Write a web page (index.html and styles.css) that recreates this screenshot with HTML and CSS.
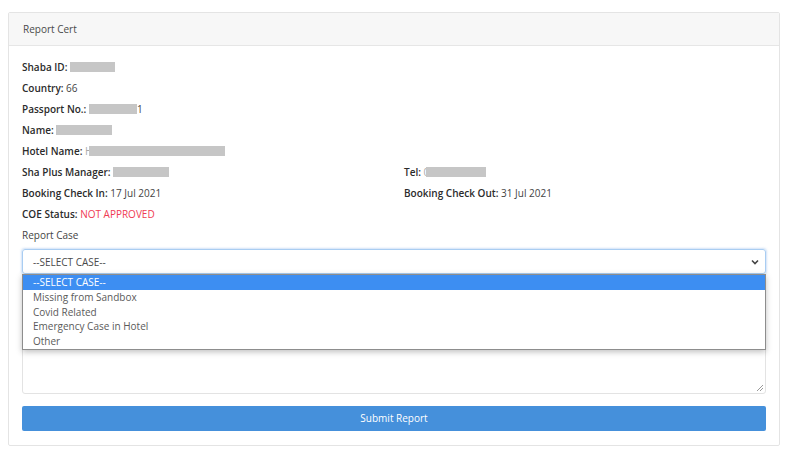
FILE: index.html
```html
<!DOCTYPE html>
<html>
<head>
<meta charset="utf-8">
<link rel="stylesheet" href="styles.css">
</head>
<body>
<div class="card">
  <div class="card-header">Report Cert</div>
  <div class="card-body">
    <div class="line"><b>Shaba ID:</b> <span class="redact" style="width:45px"></span></div>
    <div class="line"><b>Country:</b> 66</div>
    <div class="line"><b>Passport No.:</b> <span class="redact" style="width:48px"></span>1</div>
    <div class="line"><b>Name:</b> <span class="redact" style="width:56px"></span></div>
    <div class="line"><b>Hotel Name:</b> <span class="partial">H</span><span class="redact" style="width:136px"></span></div>
    <div class="two">
      <div class="line"><b>Sha Plus Manager:</b> <span class="redact" style="width:56px"></span></div>
      <div class="line"><b>Tel:</b> <span class="partial">0</span><span class="redact" style="width:60px"></span></div>
      <div class="line"><b>Booking Check In:</b> 17 Jul 2021</div>
      <div class="line"><b>Booking Check Out:</b> 31 Jul 2021</div>
    </div>
    <div class="line"><b>COE Status:</b> <span class="red">NOT APPROVED</span></div>
    <div class="line label">Report Case</div>
    <div class="select-wrap">
      <div class="select">
        <span>--SELECT CASE--</span>
        <svg class="chev" width="8" height="6" viewBox="0 0 8 6"><path d="M1 1.5 L4 4.5 L7 1.5" fill="none" stroke="#444" stroke-width="1.6"/></svg>
      </div>
      <ul class="dropdown">
        <li class="sel">--SELECT CASE--</li>
        <li>Missing from Sandbox</li>
        <li>Covid Related</li>
        <li>Emergency Case in Hotel</li>
        <li>Other</li>
      </ul>
    </div>
    <div class="textarea">
      <svg class="grip" width="8" height="8" viewBox="0 0 8 8"><path d="M7 1 L1 7 M7 4 L4 7" stroke="#999" stroke-width="1"/></svg>
    </div>
    <div class="btn">Submit Report</div>
  </div>
</div>
</body>
</html>
```
FILE: styles.css
```css
html, body {
  margin: 0;
  padding: 0;
  background: #ffffff;
}
body {
  padding: 12px 12px 0 8px;
  font-family: "Open Sans", "Noto Sans", sans-serif;
  font-size: 10px;
  color: #3a3a3a;
}
.card {
  width: 772px;
  border: 1px solid #e4e4e4;
  border-radius: 2px;
  box-sizing: border-box;
  background: #fff;
}
.card-header {
  height: 32px;
  line-height: 32px;
  padding-left: 14px;
  background: #f7f7f7;
  border-bottom: 1px solid #e6e6e6;
  color: #4a4a4a;
}
.card-body {
  padding: 11px 13px 14px 13px;
}
.line {
  height: 21px;
  line-height: 21px;
  white-space: nowrap;
  color: #444;
}
.line b {
  font-weight: 600;
  color: #2b2b2b;
}
.two {
  display: grid;
  grid-template-columns: 361px 1fr;
  column-gap: 21px;
}
.redact {
  display: inline-block;
  height: 10px;
  background: #c6c6c6;
  vertical-align: -1px;
}
.partial {
  color: #aaa;
  margin-right: -3px;
}
.red {
  color: #ef3b52;
}
.label {
  color: #444;
}
.select-wrap {
  position: relative;
  margin-top: 3px;
}
.select {
  height: 25px;
  box-sizing: border-box;
  border: 1px solid #a9cdf2;
  border-radius: 3px;
  box-shadow: 0 0 2px 1px rgba(120, 170, 230, 0.35);
  display: flex;
  align-items: center;
  justify-content: space-between;
  padding: 0 6px 0 10px;
  color: #4a4a4a;
}
.chev {
  display: block;
}
.dropdown {
  position: absolute;
  left: 0;
  right: 0;
  top: 25px;
  margin: 0;
  padding: 0;
  list-style: none;
  background: #fff;
  border: 1px solid #8d8d8d;
  box-shadow: 0 2px 6px rgba(0, 0, 0, 0.25);
  z-index: 2;
}
.dropdown li {
  height: 14.8px;
  line-height: 14.8px;
  padding-left: 10px;
  color: #5a5a5a;
}
.dropdown li.sel {
  background: #3d8ef2;
  color: #fff;
}
.textarea {
  margin-top: 11px;
  height: 109px;
  box-sizing: border-box;
  border: 1px solid #e3e3e3;
  border-radius: 3px;
  position: relative;
}
.grip {
  position: absolute;
  right: 1px;
  bottom: 1px;
}
.btn {
  margin-top: 12px;
  height: 25px;
  line-height: 25px;
  background: #4590db;
  border-radius: 2px;
  color: #fff;
  text-align: center;
}
```
